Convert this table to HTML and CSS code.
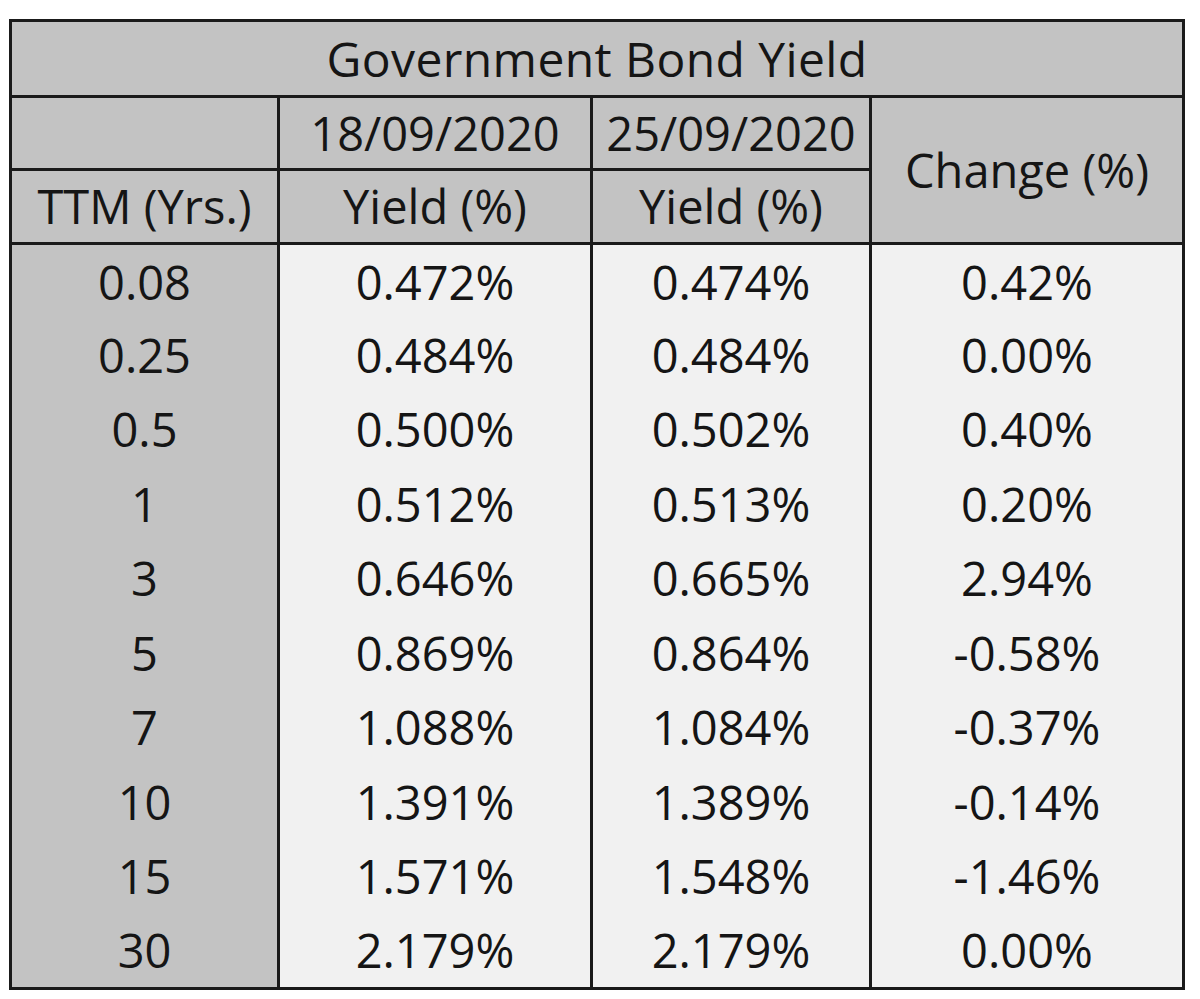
FILE: index.html
```html
<!DOCTYPE html>
<html>
<head>
<meta charset="utf-8">
<link rel="stylesheet" href="styles.css">
</head>
<body>
<table class="bond">
  <colgroup>
    <col class="c1"><col class="c2"><col class="c3"><col class="c4">
  </colgroup>
  <thead>
    <tr class="h1"><th colspan="4" class="title">Government Bond Yield</th></tr>
    <tr class="h2"><th></th><th>18/09/2020</th><th>25/09/2020</th><th rowspan="2">Change (%)</th></tr>
    <tr class="h3"><th>TTM (Yrs.)</th><th>Yield (%)</th><th>Yield (%)</th></tr>
  </thead>
  <tbody>
    <tr><th>0.08</th><td>0.472%</td><td>0.474%</td><td>0.42%</td></tr>
    <tr><th>0.25</th><td>0.484%</td><td>0.484%</td><td>0.00%</td></tr>
    <tr><th>0.5</th><td>0.500%</td><td>0.502%</td><td>0.40%</td></tr>
    <tr><th>1</th><td>0.512%</td><td>0.513%</td><td>0.20%</td></tr>
    <tr><th>3</th><td>0.646%</td><td>0.665%</td><td>2.94%</td></tr>
    <tr><th>5</th><td>0.869%</td><td>0.864%</td><td>-0.58%</td></tr>
    <tr><th>7</th><td>1.088%</td><td>1.084%</td><td>-0.37%</td></tr>
    <tr><th>10</th><td>1.391%</td><td>1.389%</td><td>-0.14%</td></tr>
    <tr><th>15</th><td>1.571%</td><td>1.548%</td><td>-1.46%</td></tr>
    <tr><th>30</th><td>2.179%</td><td>2.179%</td><td>0.00%</td></tr>
  </tbody>
</table>
</body>
</html>
```
FILE: styles.css
```css
html, body {
  margin: 0;
  padding: 0;
  background: #ffffff;
}
body {
  padding: 19px 0 0 9px;
}
.bond {
  border-collapse: collapse;
  table-layout: fixed;
  width: 1173px;
  font-family: "Open Sans", "Liberation Sans", sans-serif;
  font-size: 47px;
  color: #151515;
  border: 3px solid #1a1a1a;
}
.c1 { width: 268px; }
.c2 { width: 313px; }
.c3 { width: 279px; }
.c4 { width: 313px; }
.bond th, .bond td {
  border: 3px solid #1a1a1a;
  padding: 0;
  text-align: center;
  vertical-align: middle;
  font-weight: 500;
  line-height: 1;
}
.bond thead th {
  background: #c3c3c3;
}
.bond thead th.title {
  font-size: 48px;
  letter-spacing: 0.4px;
}
.bond tbody th {
  background: #c3c3c3;
  border-top: none;
  border-bottom: none;
}
.bond tbody td {
  background: #f1f1f1;
  border-top: none;
  border-bottom: none;
}
.h1 { height: 76px; }
.h2 { height: 73px; }
.h3 { height: 74px; }
.bond tbody tr { height: 74.5px; }
.bond tbody tr:first-child th,
.bond tbody tr:first-child td { padding-top: 2px; }
```
